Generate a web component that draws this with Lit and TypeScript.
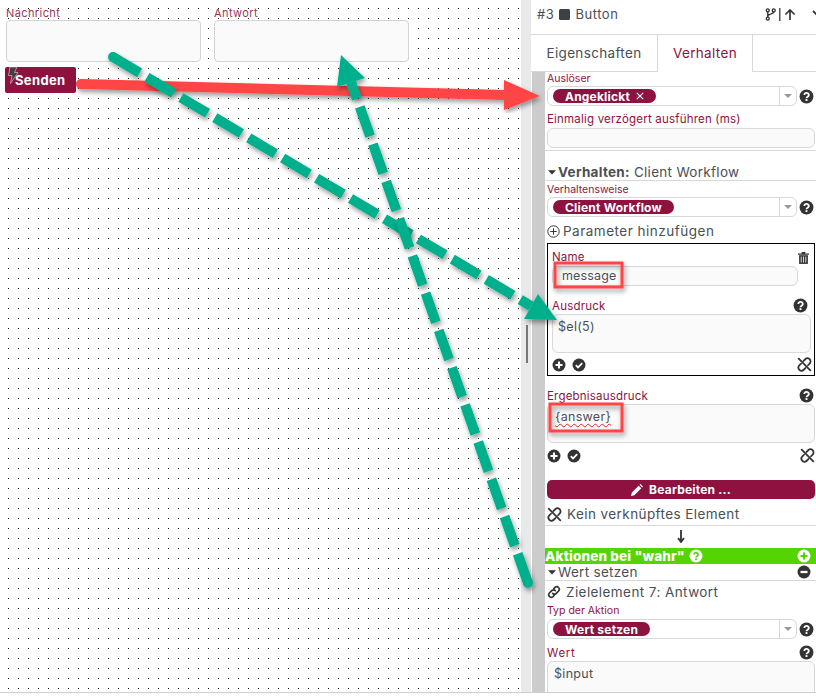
import { LitElement, html, css, svg } from "lit";
import { customElement } from "lit/decorators.js";

const help = () => html`<svg class="ic" viewBox="0 0 16 16" width="15" height="15"><circle cx="8" cy="8" r="7.4" fill="#333"/><path d="M5.6 6.3a2.4 2.2 0 1 1 3.6 1.9c-.9.5-1.2.8-1.2 1.6" fill="none" stroke="#fff" stroke-width="1.9"/><rect x="7" y="10.8" width="2" height="2" fill="#fff"/></svg>`;
const helpGreen = () => html`<svg class="ic" viewBox="0 0 16 16" width="14" height="14"><circle cx="8" cy="8" r="7.4" fill="#fff"/><path d="M5.6 6.3a2.4 2.2 0 1 1 3.6 1.9c-.9.5-1.2.8-1.2 1.6" fill="none" stroke="#54d400" stroke-width="1.9"/><rect x="7" y="10.8" width="2" height="2" fill="#54d400"/></svg>`;
const plusC = (c = "#333", p = "#fff") => html`<svg class="ic" viewBox="0 0 16 16" width="14" height="14"><circle cx="8" cy="8" r="7.4" fill="${c}"/><path d="M8 4v8M4 8h8" stroke="${p}" stroke-width="2.4"/></svg>`;
const minusC = () => html`<svg class="ic" viewBox="0 0 16 16" width="14" height="14"><circle cx="8" cy="8" r="7.4" fill="#333"/><path d="M4 8h8" stroke="#fff" stroke-width="2.6"/></svg>`;
const checkC = () => html`<svg class="ic" viewBox="0 0 16 16" width="14" height="14"><circle cx="8" cy="8" r="7.4" fill="#333"/><path d="M4.3 8.2l2.6 2.6 4.8-4.9" fill="none" stroke="#fff" stroke-width="2"/></svg>`;
const unlink = () => html`<svg class="ic" viewBox="0 0 16 16" width="15" height="15" fill="none" stroke="#333" stroke-width="1.9" stroke-linecap="round"><path d="M7 4.2 8.8 2.4a3.2 3.2 0 0 1 4.7 4.6L11.8 8.8M9 11.8 7.2 13.6a3.2 3.2 0 0 1-4.7-4.6L4.2 7.2M1.8 1.8l12.4 12.4"/></svg>`;
const link = () => html`<svg class="ic" viewBox="0 0 16 16" width="14" height="14" fill="none" stroke="#333" stroke-width="1.9" stroke-linecap="round"><path d="M6.5 9.5a2.9 2.9 0 0 0 4.1 0l2.6-2.6a2.9 2.9 0 0 0-4.1-4.1L7.8 4.1M9.5 6.5a2.9 2.9 0 0 0-4.1 0L2.8 9.1a2.9 2.9 0 0 0 4.1 4.1l1.3-1.3"/></svg>`;
const caret = () => html`<svg class="caret" viewBox="0 0 8 5" width="8" height="5"><path d="M0 .3h8L4 4.6z" fill="#333"/></svg>`;
const sel = (label: string, x = false) => html`<div class="selrow"><div class="select"><div class="sval"><span class="chip">${label}${x ? html`<svg class="x" viewBox="0 0 8 8" width="8" height="8"><path d="M.8.8l6.4 6.4M7.2.8L.8 7.2" stroke="#fff" stroke-width="1.2"/></svg>` : ""}</span></div><div class="sarrow"><svg viewBox="0 0 8 4" width="8" height="4"><path d="M0 0h8L4 4z" fill="#999"/></svg></div></div>${help()}</div>`;

@customElement("app-root")
export class AppRoot extends LitElement {
  static styles = css`
    :host { display: block; position: relative; width: 816px; height: 697px; overflow: hidden; background: #fff;
      font-family: Inter, "Open Sans", sans-serif; color: #4a4f55; }
    * { box-sizing: border-box; }
    .main { display: flex; height: 693px; border-bottom: 1px solid #ccc; }
    .canvas { width: 521px; flex: none; padding: 7px 0 0 5px;
      background-image: radial-gradient(circle at .5px .5px, #000 .55px, transparent .75px);
      background-size: 10px 10px; background-position: 8px 8px; }
    .fields { display: flex; gap: 13px; padding-left: 1px; }
    .field { width: 195px; }
    .field label { display: block; font-size: 11px; line-height: 13px; color: #a0325c; padding-left: 1px; margin-left: -1px; letter-spacing: .4px; }
    .field div { height: 42px; background: #fafafa; border: 1px solid #d4d4d4; border-radius: 4px; }
    .send { position: relative; margin-top: 5px; width: 71px; height: 26px; background: #8e1240; border-radius: 2px; color: #fff;
      font-weight: 700; font-size: 13px; display: flex; align-items: center; padding-left: 10px; letter-spacing: .35px; }
    .send svg { position: absolute; left: 2px; top: 0; }
    .gutter { width: 10px; flex: none; background: #e8e9eb; display: flex; align-items: center; justify-content: center; padding-bottom: 4px; }
    .handle { width: 2px; height: 38px; background: #777; margin-left: 1px; }
    .panel { flex: 1; min-width: 0; display: flex; flex-direction: column; overflow: hidden; }
    .head { height: 35px; flex: none; border-bottom: 1px solid #d8d8d8; display: flex; align-items: center; justify-content: space-between;
      padding: 0 0 6px 6px; font-size: 13px; letter-spacing: .55px; width: 293px; }
    .title { display: flex; align-items: center; gap: 5px; }
    .sq { width: 11px; height: 11px; border-radius: 1.5px; background: #3c4148; }
    .tools { display: flex; align-items: center; gap: 3px; }
    .chev { margin-left: 13px; }
    .tabs { height: 37px; flex: none; display: flex; font-size: 13.5px; letter-spacing: .35px; }
    .tab { display: flex; align-items: center; justify-content: center; border-bottom: 1px solid #d8d8d8; padding-bottom: 1px; }
    .t1 { width: 126px; }
    .t2 { width: 96px; border-left: 1px solid #d8d8d8; border-right: 1px solid #d8d8d8; border-bottom: 0; color: #8e1240; }
    .t3 { flex: 1; }
    .body { flex: 1; min-height: 0; margin-left: 1px; display: flex; overflow: hidden; }
    .stripe { width: 13px; flex: none; background: #ccc; }
    .content { flex: 1; min-width: 0; padding: 0 1px 0 2px; overflow: hidden; }
    .lab { display: block; font-size: 11.5px; line-height: 14px; color: #8e1240; letter-spacing: .2px; white-space: nowrap; }
    .lab.sm { font-size: 10.5px; letter-spacing: 0; }
    .lab.wert { letter-spacing: .7px; }
    .between { display: flex; align-items: center; justify-content: space-between; }
    .selrow { display: flex; align-items: center; justify-content: space-between; height: 20px; padding-right: 1px; }
    .select { width: 250px; height: 20px; border: 1px solid #d8d8d8; border-radius: 6px; display: flex; background: #fff; }
    .sval { flex: 1; padding-left: 5px; display: flex; align-items: center; }
    .sarrow { width: 17px; border-left: 1px solid #d8d8d8; display: flex; align-items: center; justify-content: center; }
    .chip { display: inline-flex; align-items: center; gap: 6px; height: 14px; background: #8e1240; color: #fff; font-weight: 700; font-size: 12px;
      border-radius: 7px; padding: 0 12px; letter-spacing: .2px; white-space: nowrap; }
    .x { flex: none; }
    .input { height: 20px; border: 1px solid #d8d8d8; border-radius: 6px; background: #fafafa; font-size: 12.5px; line-height: 17px; padding-left: 9px; letter-spacing: .15px; }
    .ta { height: 39px; border: 1px solid #d8d8d8; border-radius: 6px; background: #fafafa; font-size: 12.5px; line-height: 18px; padding: 3px 0 0 5px; letter-spacing: .3px; }
    .ta.wide { padding-left: 7px; }
    .ta.last { padding-left: 6px; height: 60px; }
    .wavy { text-decoration: underline wavy #e22; text-decoration-thickness: 1px; text-underline-offset: 2px; text-decoration-skip-ink: none; }
    .bleed { margin-left: -2px; margin-right: -1px; }
    .sec { display: flex; align-items: center; font-size: 13.5px; letter-spacing: .3px; border-bottom: 1px solid #d8d8d8; white-space: nowrap; padding-left: 3px; }
    .sec .caret { margin-right: 2px; }
    .sec b { font-weight: 700; margin-right: 4px; }
    .sec1 { height: 31px; margin-top: 2px; border-top: 1px solid #d8d8d8; padding-top: 13px; }
    .sec2 { height: 17px; }
    .tail { margin-left: auto; margin-right: 5px; display: flex; }
    .row { display: flex; align-items: center; gap: 5px; font-size: 13.5px; letter-spacing: .42px; white-space: nowrap; }
    .row.param { height: 20px; margin-top: 4px; gap: 3px; letter-spacing: .5px; }
    .row.none { height: 27px; border-bottom: 1px solid #d8d8d8; padding: 4px 0 0 2px; }
    .row.target { height: 22px; }
    .bbox { border: 1px solid #000; height: 133px; margin-top: 2px; padding: 6px 3px 0 4px; }
    .namehead { padding-right: 2px; }
    .namein { width: 246px; margin-top: 2px; }
    .exprhead { margin-top: 12px; height: 15px; padding-right: 3px; }
    .expr { margin-top: 1px; }
    .acts { display: flex; align-items: center; justify-content: space-between; }
    .acts div { display: flex; gap: 6px; }
    .acts1 { margin: 4px -1px 0 0; }
    .acts2 { margin-top: 5px; }
    .reshead { margin-top: 12px; height: 15px; padding-right: 1px; }
    .res { margin-top: 1px; }
    .edit { height: 19px; margin-top: 17px; border-radius: 5px; background: #8e1240; color: #fff; font-weight: 700; font-size: 12px; display: flex; align-items: center; justify-content: center; gap: 6px; letter-spacing: .2px; }
    .arrow { display: flex; justify-content: center; align-items: center; height: 22px; padding-bottom: 2px; }
    .green { height: 16px; margin: 0 -1px 0 -2px; background: #54d400; color: #fff; font-weight: 800; font-size: 13.5px; letter-spacing: .15px; display: flex; align-items: center; justify-content: space-between; padding-right: 5px; white-space: nowrap; }
    .green span { display: flex; align-items: center; gap: 4px; }
    .overlay { position: absolute; inset: 0; pointer-events: none; }
  `;

  render() {
    return html`
      <div class="main">
        <div class="canvas">
          <div class="fields">
            <div class="field"><label>Nachricht</label><div></div></div>
            <div class="field"><label>Antwort</label><div></div></div>
          </div>
          <div class="send">
            <svg viewBox="0 0 12 17" width="12" height="17"><path d="M3 0h7L7.5 5.5 11 5.5 3.5 16.500 5 8.500 1.500 8.500z" fill="#4a3a44" stroke="#ddd" stroke-width=".6"/></svg>
            Senden
          </div>
        </div>
        <div class="gutter"><div class="handle"></div></div>
        <div class="panel">
          <div class="head">
            <div class="title">#3 <span class="sq"></span> Button</div>
            <div class="tools">
              <svg viewBox="0 0 12 14" width="11" height="13" fill="none" stroke="#333" stroke-width="1.5"><circle cx="3" cy="2.500" r="1.600"/><circle cx="3" cy="11.500" r="1.600"/><circle cx="9.500" cy="2.500" r="1.600"/><path d="M3 4v6M9.500 4c0 3-6.500 2-6.500 5"/></svg>
              <svg width="2" height="13"><rect width="1.500" height="13" fill="#555"/></svg>
              <svg viewBox="0 0 12 14" width="12" height="13" fill="none" stroke="#333" stroke-width="1.800"><path d="M6 13V2M1 7l5-5 5 5"/></svg>
              <svg class="chev" viewBox="0 0 12 8" width="12" height="8" fill="none" stroke="#333" stroke-width="1.800"><path d="M1 1l5 5 5-5"/></svg>
            </div>
          </div>
          <div class="tabs">
            <div class="tab t1">Eigenschaften</div>
            <div class="tab t2">Verhalten</div>
            <div class="tab t3"></div>
          </div>
          <div class="body">
            <div class="stripe"></div>
            <div class="content">
              <label class="lab sm">Auslöser</label>
              ${sel("Angeklickt", true)}
              <label class="lab" style="margin-top:6px">Einmalig verzögert ausführen (ms)</label>
              <div class="input" style="margin-top:2px"></div>
              <div class="sec sec1 bleed">${caret()}<b>Verhalten:</b> Client Workflow</div>
              <label class="lab sm" style="margin-top:2px">Verhaltensweise</label>
              ${sel("Client Workflow")}
              <div class="row param">
                <svg class="ic" viewBox="0 0 16 16" width="13" height="13" fill="none" stroke="#333" stroke-width="1.2"><circle cx="8" cy="8" r="7"/><path d="M8 4v8M4 8h8"/></svg>
                Parameter hinzufügen
              </div>
              <div class="bbox">
                <div class="between namehead"><label class="lab">Name</label>
                  <svg viewBox="0 0 12 14" width="11" height="13"><path d="M0 2.500h12v1.500H0zM4 1h4v1.500H4z" fill="#333"/><path d="M1.200 4.500h9.600V14H1.200z" fill="#333"/><path d="M3.500 6v6.500M6 6v6.500M8.500 6v6.500" stroke="#fff" stroke-width=".9"/></svg>
                </div>
                <div class="input namein">message</div>
                <div class="between exprhead"><label class="lab">Ausdruck</label>${help()}</div>
                <div class="ta expr">$el(5)</div>
                <div class="acts acts1"><div>${plusC()}${checkC()}</div>${unlink()}</div>
              </div>
              <div class="between reshead"><label class="lab">Ergebnisausdruck</label>${help()}</div>
              <div class="ta wide res"><span class="wavy">{answer}</span></div>
              <div class="acts acts2"><div>${plusC()}${checkC()}</div>${unlink()}</div>
              <div class="edit">
                <svg viewBox="0 0 14 14" width="12" height="12"><path d="M0 14l1-4 8-8 3 3-8 8zM10 1l1-1 3 3-1 1z" fill="#fff"/></svg>
                Bearbeiten ...
              </div>
              <div class="row none bleed">${unlink()}Kein verknüpftes Element</div>
              <div class="arrow">
                <svg viewBox="0 0 8 13" width="8" height="13"><path d="M4 0v11M1 8l3 4 3-4" fill="none" stroke="#333" stroke-width="1.8"/></svg>
              </div>
              <div class="green"><span>Aktionen bei "wahr" ${helpGreen()}</span>${plusC("#fff", "#54d400")}</div>
              <div class="sec sec2 bleed">${caret()}Wert setzen<span class="tail">${minusC()}</span></div>
              <div class="row target">${link()}Zielelement 7: Antwort</div>
              <label class="lab sm" style="margin-top:1px;padding-bottom:1px">Typ der Aktion</label>
              ${sel("Wert setzen")}
              <div class="between reshead" style="margin-top:6px"><label class="lab wert">Wert</label>${help()}</div>
              <div class="ta last res">$input</div>
            </div>
          </div>
        </div>
      </div>
      <svg class="overlay" viewBox="0 0 816 697" width="816" height="697">
        <defs><filter id="s" x="-10%" y="-10%" width="120%" height="120%"><feDropShadow dx="1.5" dy="3" stdDeviation="2.5" flood-color="#000" flood-opacity=".4"/></filter></defs>
        ${svg`<g filter="url(#s)">
          <path d="M81 84 L506 95" stroke="#ff4545" stroke-width="10" stroke-linecap="round" fill="none"/>
          <path d="M504 80 L540 96 L504 110z" fill="#ff4545"/>
        </g>
        <g filter="url(#s)">
          <circle cx="113" cy="57" r="5" fill="#06b08d"/>
          <path d="M113 57 L531 306" stroke="#06b08d" stroke-width="10" stroke-dasharray="31 8.5" fill="none"/>
          <path d="M538 294 L557 320 L524 319z" fill="#06b08d"/>
        </g>
        <g filter="url(#s)">
          <circle cx="528" cy="583" r="5" fill="#06b08d"/>
          <path d="M528 583 L351 82" stroke="#06b08d" stroke-width="10" stroke-dasharray="31 8.5" fill="none"/>
          <path d="M341 55 L365 78 L337 87z" fill="#06b08d"/>
        </g>
        <g filter="url(#s)" fill="none" stroke="#ff4545" stroke-width="3">
          <rect x="555" y="263" width="67" height="24"/>
          <rect x="550" y="404" width="72" height="27"/>
        </g>`}
      </svg>
    `;
  }
}
